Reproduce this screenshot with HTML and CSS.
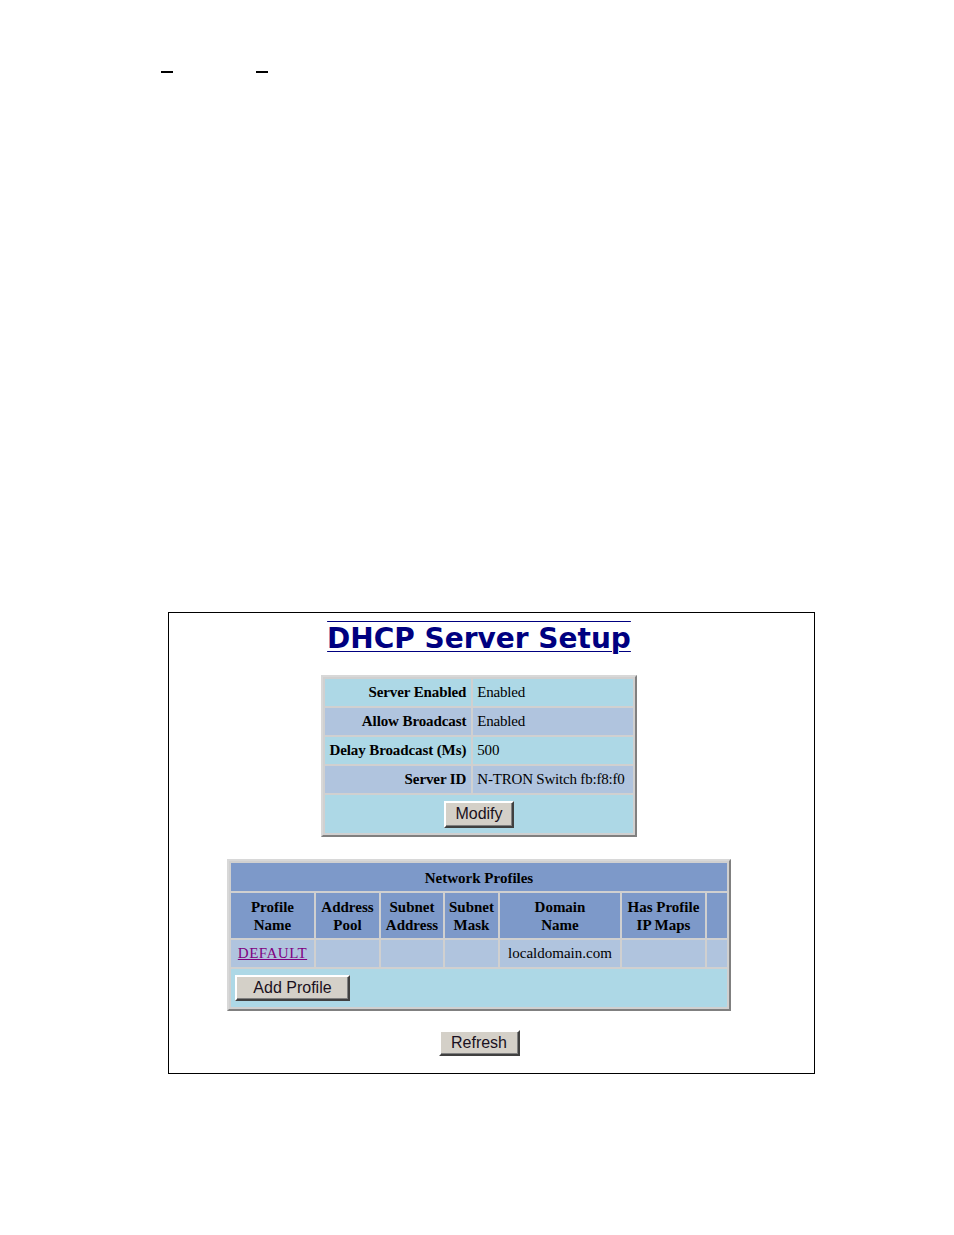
FILE: index.html
```html
<!DOCTYPE html>
<html>
<head>
<meta charset="utf-8">
<title>DHCP Server Setup</title>
<link rel="stylesheet" href="styles.css">
</head>
<body>
<div class="marks"><span class="mark"></span><span class="mark"></span></div>
<div class="frame">
  <div class="content">
    <h1 class="title">DHCP Server Setup</h1>
    <table class="grid settings">
      <tr class="lb"><th class="lbl">Server Enabled</th><td class="val">Enabled</td></tr>
      <tr class="sb"><th class="lbl">Allow Broadcast</th><td class="val">Enabled</td></tr>
      <tr class="lb"><th class="lbl">Delay Broadcast (Ms)</th><td class="val">500</td></tr>
      <tr class="sb"><th class="lbl">Server ID</th><td class="val">N-TRON Switch fb:f8:f0</td></tr>
      <tr class="lb"><td class="btncell" colspan="2"><button class="btn btn-modify">Modify</button></td></tr>
    </table>
    <table class="grid profiles">
      <colgroup>
        <col class="c1"><col class="c2"><col class="c3"><col class="c4"><col class="c5"><col class="c6"><col class="c7">
      </colgroup>
      <tr class="hd"><th class="cap" colspan="7">Network Profiles</th></tr>
      <tr class="hd cols">
        <th>Profile<br>Name</th>
        <th>Address<br>Pool</th>
        <th>Subnet<br>Address</th>
        <th>Subnet<br>Mask</th>
        <th>Domain<br>Name</th>
        <th>Has Profile<br>IP Maps</th>
        <th></th>
      </tr>
      <tr class="sb data">
        <td><a class="link" href="#">DEFAULT</a></td>
        <td></td><td></td><td></td>
        <td>localdomain.com</td>
        <td></td><td></td>
      </tr>
      <tr class="lb addrow"><td colspan="7"><button class="btn btn-add">Add Profile</button></td></tr>
    </table>
    <div class="refresh"><button class="btn btn-refresh">Refresh</button></div>
  </div>
</div>
</body>
</html>
```

FILE: styles.css
```css
html, body {
  margin: 0;
  padding: 0;
  background: #ffffff;
}
body {
  width: 954px;
  height: 1235px;
  overflow: hidden;
  font-family: "Liberation Serif", "Times New Roman", serif;
}
.marks {
  display: flex;
  gap: 83px;
  padding-left: 161px;
  padding-top: 71px;
  height: 2px;
}
.mark {
  display: block;
  width: 12px;
  height: 2px;
  background: #000;
}
.frame {
  box-sizing: border-box;
  margin-top: 539px;
  margin-left: 168px;
  width: 647px;
  height: 462px;
  border: 1px solid #000;
}
.content {
  width: 620px;
  display: flex;
  flex-direction: column;
  align-items: center;
}
.title {
  margin: 0;
  margin-top: 9px;
  font-family: "DejaVu Sans", Verdana, sans-serif;
  font-weight: bold;
  font-size: 28px;
  line-height: 34px;
  color: #000080;
  text-decoration: underline overline;
  text-decoration-thickness: 1px;
  text-underline-offset: 3px;
}
.grid {
  border-collapse: separate;
  border-spacing: 2px;
  border: 2px solid;
  border-color: #d8d8d8 #808080 #808080 #d8d8d8;
  background: #d0d0d0;
  font-size: 15px;
  color: #000;
}
.grid th, .grid td {
  padding: 0 5px;
  white-space: nowrap;
}
.lb { background: #add8e6; }
.sb { background: #b0c4de; }
.hd { background: #7d99c9; }
.settings {
  margin-top: 19px;
}
.settings th, .settings td {
  height: 27px;
}
.settings .lbl {
  text-align: right;
  font-weight: bold;
  padding: 0 5px 0 4px;
  letter-spacing: -0.1px;
}
.settings .val {
  text-align: left;
  padding: 0 8px 0 4px;
  letter-spacing: -0.2px;
}
.settings .btncell {
  height: 38px;
  text-align: center;
}
.btn {
  box-sizing: border-box;
  font-family: "Liberation Sans", Arial, sans-serif;
  font-size: 16px;
  color: #1a1020;
  background: #d4d0c8;
  border: 2px solid;
  border-color: #ffffff #404040 #404040 #ffffff;
  box-shadow: inset -1px -1px 0 #808080;
  padding: 0;
  margin: 0;
  height: 27px;
  line-height: 20px;
  letter-spacing: 0;
}
.btn-modify { width: 70px; }
.btn-add { width: 115px; height: 26px; }
.btn-refresh { width: 81px; height: 26px; }
.profiles {
  margin-top: 22px;
  table-layout: fixed;
  width: 504px;
}
.profiles .c1 { width: 83px; }
.profiles .c2 { width: 63px; }
.profiles .c3 { width: 62px; }
.profiles .c4 { width: 53px; }
.profiles .c5 { width: 120px; }
.profiles .c6 { width: 83px; }
.profiles .c7 { width: 20px; }
.profiles th, .profiles td {
  padding: 0 2px;
  text-align: center;
}
.profiles .cap {
  height: 26px;
  padding-top: 2px;
}
.profiles .cols th {
  height: 45px;
  line-height: 18px;
}
.profiles .data td {
  height: 27px;
}
.profiles .addrow td {
  height: 38px;
  text-align: left;
  padding-left: 4px;
}
.link {
  color: #800080;
  text-decoration: underline;
  letter-spacing: 0.5px;
}
.refresh {
  margin-top: 19px;
}
```
